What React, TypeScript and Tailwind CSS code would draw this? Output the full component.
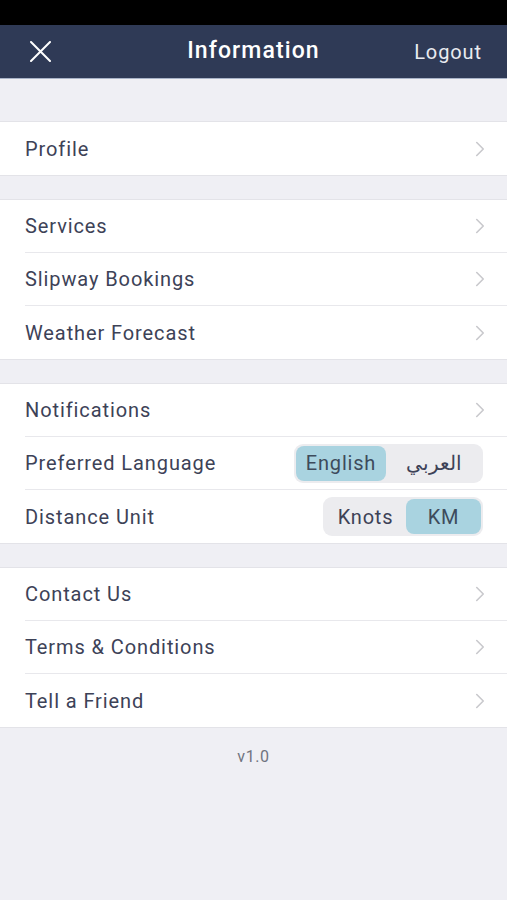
import { ChevronRight } from 'lucide-react';

type Row = { label: string; control?: 'lang' | 'unit' };

const groups: Row[][] = [
  [{ label: 'Profile' }],
  [{ label: 'Services' }, { label: 'Slipway Bookings' }, { label: 'Weather Forecast' }],
  [
    { label: 'Notifications' },
    { label: 'Preferred Language', control: 'lang' },
    { label: 'Distance Unit', control: 'unit' },
  ],
  [{ label: 'Contact Us' }, { label: 'Terms & Conditions' }, { label: 'Tell a Friend' }],
];

function Segmented({ options, active }: { options: string[]; active: number }) {
  return (
    <div className="flex items-center rounded-[9px] bg-[#ececef] p-[2px]">
      {options.map((opt, i) => (
        <div
          key={opt}
          className={
            i === active
              ? 'flex h-[35px] items-center justify-center rounded-[8px] bg-[#a9d3e0] px-[8px] text-[20px] tracking-[0.8px] text-[#3d4b5c]'
              : 'flex h-[35px] items-center justify-center rounded-[8px] px-[8px] text-[20px] tracking-[0.8px] text-[#3d4257]'
          }
          style={{ minWidth: i === active ? (opt === 'KM' ? 75 : 90) : opt === 'Knots' ? 81 : 95 }}
        >
          {opt}
        </div>
      ))}
    </div>
  );
}

export default function App() {
  return (
    <div
      className="flex min-h-[900px] w-[507px] flex-col bg-[#efeff4]"
      style={{ fontFamily: 'Roboto, "Noto Sans", sans-serif' }}
    >
      {/* status bar */}
      <div className="h-[25px] bg-black" />

      {/* nav bar */}
      <div className="relative flex h-[54px] items-center justify-between border-b border-[#a9b3c8] bg-[#2f3a56] px-[25px]">
        <svg className="ml-[5px]" width="21" height="21" viewBox="0 0 21 21">
          <path d="M1 1 L20 20 M20 1 L1 20" stroke="white" strokeWidth="2" strokeLinecap="round" />
        </svg>
        <div className="absolute left-1/2 -translate-x-1/2 text-[23px] font-medium tracking-[1.1px] text-white">
          Information
        </div>
        <div className="text-[20px] tracking-[0.9px] text-[#e9ebf0]">Logout</div>
      </div>

      <div className="h-[42px]" />

      <div className="flex flex-col gap-[23px]">
        {groups.map((rows, gi) => (
          <div key={gi} className="border-y border-[#e3e3e8] bg-white">
            {rows.map((row, ri) => (
              <div key={row.label} className="pl-[25px]">
                <div
                  className={
                    ri < rows.length - 1
                      ? 'flex h-[53px] items-center justify-between border-b border-[#e8e8ec] pr-[24px]'
                      : 'flex h-[53px] items-center justify-between pr-[24px]'
                  }
                >
                  <span className="text-[20px] tracking-[0.9px] text-[#3d4257]">{row.label}</span>
                  {row.control === 'lang' ? (
                    <Segmented options={['English', 'العربي']} active={0} />
                  ) : row.control === 'unit' ? (
                    <Segmented options={['Knots', 'KM']} active={1} />
                  ) : (
                    <ChevronRight className="mr-[-10px] h-[26px] w-[26px] text-[#c9c9cd]" strokeWidth={1.5} />
                  )}
                </div>
              </div>
            ))}
          </div>
        ))}
      </div>

      <div className="mt-[17px] text-center text-[16px] tracking-[0.6px] text-[#707480]">v1.0</div>
    </div>
  );
}
